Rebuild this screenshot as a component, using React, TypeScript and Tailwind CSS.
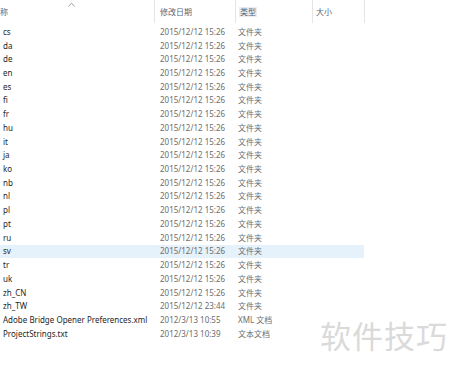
import React from "react";

interface FileRow {
  name: string;
  date: string;
  type: string;
}

const folders = [
  "cs", "da", "de", "en", "es", "fi", "fr", "hu", "it", "ja", "ko",
  "nb", "nl", "pl", "pt", "ru", "sv", "tr", "uk", "zh_CN",
];

const rows: FileRow[] = [
  ...folders.map((name) => ({ name, date: "2015/12/12 15:26", type: "文件夹" })),
  { name: "zh_TW", date: "2015/12/12 23:44", type: "文件夹" },
  { name: "Adobe Bridge Opener Preferences.xml", date: "2012/3/13 10:55", type: "XML 文档" },
  { name: "ProjectStrings.txt", date: "2012/3/13 10:39", type: "文本文档" },
];

const font = { fontFamily: '"Noto Sans", "Noto Sans CJK SC", sans-serif' };

const HeaderCell: React.FC<{ width: string; children?: React.ReactNode; className?: string }> = ({
  width,
  children,
  className = "",
}) => (
  <div className={`${width} h-full flex items-center border-r border-[#e5e5e5] ${className}`}>
    {children}
  </div>
);

export default function App() {
  return (
    <div
      className="relative w-[450px] h-[374px] bg-white overflow-hidden text-[8px] leading-none"
      style={font}
    >
      {/* header */}
      <div className="flex h-[23px] mb-[2px] text-[#5b6676]">
        <div className="relative w-[155px] h-full flex items-center border-r border-[#e5e5e5]">
          <span>称</span>
          <svg
            className="absolute left-[68px] top-[2px]"
            width="7"
            height="5"
            viewBox="0 0 7 5"
            fill="none"
            stroke="#9aa0a8"
            strokeWidth="1"
          >
            <path d="M0.5 4.5 L3.5 1 L6.5 4.5" />
          </svg>
        </div>
        <HeaderCell width="w-[81px]" className="pl-[5px]">
          修改日期
        </HeaderCell>
        <HeaderCell width="w-[77px]" className="pl-[3px]">
          <span className="bg-[#e9edf2] px-[1px] py-[1px]">类型</span>
        </HeaderCell>
        <HeaderCell width="w-[52px]" className="pl-[3px]">
          大小
        </HeaderCell>
      </div>

      {/* rows */}
      <div className="w-[364px]">
        {rows.map((row) => (
          <div
            key={row.name}
            className={`flex items-center h-[13.73px] ${row.name === "sv" ? "bg-[#e5f1fb]" : ""}`}
          >
            <div className="w-[155px] pl-[3px] text-[#1f1f1f] whitespace-nowrap">{row.name}</div>
            <div className="w-[81px] pl-[5px] text-[#6d6d6d] whitespace-nowrap">{row.date}</div>
            <div className="w-[77px] pl-[2px] text-[#6d6d6d] whitespace-nowrap">{row.type}</div>
            <div className="w-[51px]" />
          </div>
        ))}
      </div>

      {/* watermark */}
      <div className="absolute left-[320px] top-[321px] text-[31px] leading-none text-[#dadada] tracking-[1px]">
        软件技巧
      </div>
    </div>
  );
}
